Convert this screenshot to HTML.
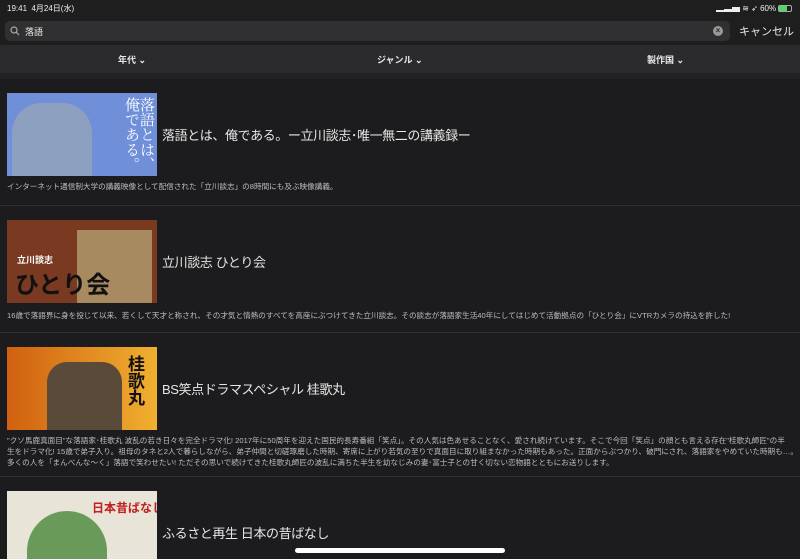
<!DOCTYPE html>
<html><head><meta charset="utf-8"><style>
*{margin:0;padding:0;box-sizing:border-box}
body{width:800px;height:559px;overflow:hidden;background:#1c1c1e;font-family:"Liberation Sans","Noto Sans CJK JP",sans-serif;color:#ddd;position:relative}
.abs{position:absolute}
.top{left:0;top:0;width:800px;height:46px;background:#1e1e1e}
.filter{left:0;top:45px;width:800px;height:28px;background:#2b2b2d;font-size:9px;color:#e8e8e8;font-weight:bold}
.filter span{position:absolute;top:8px}
.div{left:0;width:800px;height:1px;background:#2f2f31}
.thumb{left:7px;width:150px;height:83px;overflow:hidden}
.title{left:162px;font-size:13px;letter-spacing:-0.4px;color:#e6e6e6;white-space:nowrap}
.desc{left:7px;font-size:7.6px;color:#bdbdbd;line-height:11px;width:790px;white-space:nowrap}
</style></head><body>
<div class="abs top"></div>
<div class="abs" style="left:7px;top:3px;font-size:8px;color:#eee">19:41&nbsp;&nbsp;4月24日(水)</div>
<div class="abs" style="left:716px;top:3px;font-size:8px;color:#eee">▂▃▅ ≋ ➶ 60% <span style="display:inline-block;width:14px;height:7px;border:1px solid #aaa;border-radius:2px;vertical-align:-1px;position:relative"><span style="position:absolute;left:0;top:0;width:8px;height:5px;background:#4cd964"></span></span></div>
<div class="abs" style="left:5px;top:21px;width:725px;height:20px;background:#303032;border-radius:5px"></div>
<svg class="abs" style="left:10px;top:26px" width="10" height="10"><circle cx="4" cy="4" r="3" stroke="#aaa" fill="none" stroke-width="1.2"/><line x1="6.3" y1="6.3" x2="9" y2="9" stroke="#aaa" stroke-width="1.2"/></svg>
<div class="abs" style="left:25px;top:25px;font-size:9px;color:#eee">落語</div>
<div class="abs" style="left:713px;top:26px;width:10px;height:10px;border-radius:50%;background:#999;color:#303032;font-size:8px;line-height:10px;text-align:center;font-weight:bold">×</div>
<div class="abs" style="left:739px;top:23px;font-size:11px;color:#e8e8e8">キャンセル</div>
<div class="abs filter"><span style="left:118px">年代 ⌄</span><span style="left:377px">ジャンル ⌄</span><span style="left:647px">製作国 ⌄</span></div>
<div class="abs" style="left:0;top:73px;width:800px;height:6px;background:#222224"></div>

<div class="abs thumb" style="top:93px;background:#6f8fd8"><div style="position:absolute;left:5px;top:10px;width:80px;height:73px;background:#8da0c0;border-radius:30px 30px 0 0"></div><div style="position:absolute;left:118px;top:4px;font-size:15px;line-height:15px;writing-mode:vertical-rl;color:#fff;font-family:'Noto Serif CJK SC',serif">落語とは、俺である。</div></div>
<div class="abs title" style="top:125px">落語とは、俺である。ー立川談志･唯一無二の講義録ー</div>
<div class="abs desc" style="top:181px">インターネット通信制大学の講義映像として配信された「立川談志」の8時間にも及ぶ映像講義。</div>
<div class="abs div" style="top:205px"></div>

<div class="abs thumb" style="top:220px;background:#7a3a22"><div style="position:absolute;left:70px;top:10px;width:75px;height:73px;background:#a88a60"></div><div style="position:absolute;left:10px;top:33px;font-size:9px;color:#fff;font-weight:bold">立川談志</div><div style="position:absolute;left:8px;top:45px;font-size:24px;color:#111;font-weight:bold">ひとり会</div></div>
<div class="abs title" style="top:252px">立川談志 ひとり会</div>
<div class="abs desc" style="top:310px">16歳で落語界に身を投じて以来、若くして天才と称され、その才気と情熱のすべてを高座にぶつけてきた立川談志。その談志が落語家生活40年にしてはじめて活動拠点の「ひとり会」にVTRカメラの持込を許した!</div>
<div class="abs div" style="top:332px"></div>

<div class="abs thumb" style="top:347px;background:linear-gradient(90deg,#d06010,#f0b030)"><div style="position:absolute;left:40px;top:15px;width:75px;height:68px;background:#5a4a3a;border-radius:20px 20px 0 0"></div><div style="position:absolute;left:118px;top:8px;font-size:17px;line-height:19px;writing-mode:vertical-rl;color:#111;font-weight:bold">桂歌丸</div></div>
<div class="abs title" style="top:379px">BS笑点ドラマスペシャル 桂歌丸</div>
<div class="abs desc" style="top:435px">"クソ馬鹿真面目"な落語家･桂歌丸 波乱の若き日々を完全ドラマ化! 2017年に50周年を迎えた国民的長寿番組「笑点」。その人気は色あせることなく、愛され続けています。そこで今回「笑点」の顔とも言える存在"桂歌丸師匠"の半<br>生をドラマ化! 15歳で弟子入り。祖母のタネと2人で暮らしながら、弟子仲間と切磋琢磨した時期、寄席に上がり若気の至りで真面目に取り組まなかった時期もあった。正面からぶつかり、破門にされ、落語家をやめていた時期も…。<br>多くの人を「まんべんな〜く」落語で笑わせたい! ただその思いで続けてきた桂歌丸師匠の波乱に満ちた半生を幼なじみの妻･富士子との甘く切ない恋物語とともにお送りします。</div>
<div class="abs div" style="top:476px"></div>

<div class="abs thumb" style="top:491px;height:68px;background:#e8e4d8"><div style="position:absolute;left:20px;top:20px;width:80px;height:60px;background:#6a9a5a;border-radius:40px 40px 0 0"></div><div style="position:absolute;left:85px;top:8px;font-size:12px;color:#c02020;font-weight:bold;white-space:nowrap">日本昔ばなし</div></div>
<div class="abs title" style="top:523px">ふるさと再生 日本の昔ばなし</div>
<div class="abs" style="left:295px;top:548px;width:210px;height:5px;background:#fff;border-radius:3px"></div>
</body></html>
